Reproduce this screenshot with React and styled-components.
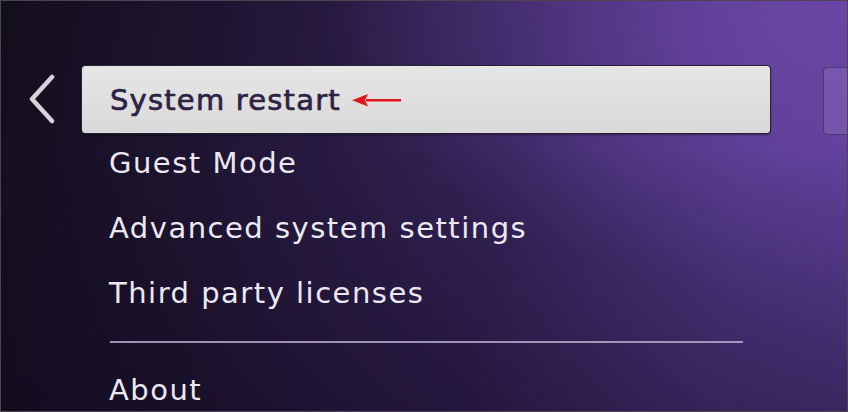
import React from "react";
import styled, { createGlobalStyle } from "styled-components";

const GlobalStyle = createGlobalStyle`
  html, body {
    margin: 0;
    padding: 0;
    background: #1a1424;
  }
  * {
    box-sizing: border-box;
  }
`;

const Screen = styled.main`
  width: 848px;
  height: 412px;
  position: relative;
  overflow: hidden;
  border: 1px solid #4a4550;
  background:
    radial-gradient(ellipse 520px 300px at 100% 0%, rgba(108, 72, 168, 0.9), rgba(108, 72, 168, 0) 100%),
    linear-gradient(100deg, #130e1c 0%, #1f1532 25%, #352359 58%, #553a8c 85%, #5f409a 100%);
  font-family: "DejaVu Sans", "Open Sans", sans-serif;
  display: flex;
`;

const Shade = styled.div`
  position: absolute;
  inset: 0;
  background: linear-gradient(180deg, rgba(0, 0, 0, 0) 35%, rgba(14, 8, 26, 0.45) 100%);
  pointer-events: none;
`;

const BackColumn = styled.div`
  width: 80px;
  flex: none;
  display: flex;
  justify-content: center;
  padding-top: 73px;
  padding-left: 2px;
`;

const Menu = styled.ul`
  list-style: none;
  margin: 0;
  padding: 64px 0 0;
  width: 690px;
  display: flex;
  flex-direction: column;
  position: relative;
  z-index: 1;
`;

const Item = styled.li`
  flex: none;
  height: ${(p) => (p.$selected ? "69px" : "65px")};
  margin-bottom: ${(p) => (p.$selected ? "-4px" : "0")};
  display: flex;
  align-items: center;
  gap: 11px;
  padding-left: 28px;
  font-size: 29px;
  letter-spacing: ${(p) => (p.$selected ? "1.2px" : "1.5px")};
  font-weight: 400;
  -webkit-text-stroke: ${(p) => (p.$selected ? "0.7px #2d2244" : "0")};
  color: ${(p) => (p.$selected ? "#2d2244" : "#ece8f2")};
  border-radius: 4px;
  border: ${(p) => (p.$selected ? "1px solid #2a2233" : "none")};
  background: ${(p) =>
    p.$selected ? "linear-gradient(180deg, #e6e6e6 0%, #d9d9d9 100%)" : "transparent"};
  box-shadow: ${(p) => (p.$selected ? "0 1px 2px rgba(0,0,0,0.4)" : "none")};
`;

const Divider = styled.li`
  flex: none;
  height: 2px;
  margin: 16px 28px 14px 29px;
  background: #b6a7c9;
  opacity: 0.85;
`;

const Peek = styled.div`
  position: absolute;
  left: 822px;
  top: 66px;
  width: 40px;
  height: 68px;
  border-radius: 4px;
  border: 1px solid rgba(40, 25, 70, 0.5);
  background: rgba(150, 120, 190, 0.35);
`;

function BackIcon() {
  return (
    <svg width="30" height="50" viewBox="0 0 30 50">
      <path
        d="M25 3 L5 25 L25 47"
        fill="none"
        stroke="#d6d3da"
        strokeWidth="4.5"
        strokeLinecap="round"
        strokeLinejoin="round"
      />
    </svg>
  );
}

function RedArrow() {
  return (
    <svg width="50" height="14" viewBox="0 0 50 14">
      <path d="M14 6 H49 V8.5 H14 Z" fill="#e01818" />
      <path d="M0 7.2 L16 1 L13 7.2 L16 13.4 Z" fill="#e01818" />
    </svg>
  );
}

const ITEMS = ["Guest Mode", "Advanced system settings", "Third party licenses"];

export default function App() {
  return (
    <>
      <GlobalStyle />
      <Screen>
        <Shade />
        <BackColumn>
          <BackIcon />
        </BackColumn>
        <Menu>
          <Item $selected>
            System restart
            <RedArrow />
          </Item>
          {ITEMS.map((label) => (
            <Item key={label}>{label}</Item>
          ))}
          <Divider />
          <Item>About</Item>
        </Menu>
        <Peek />
      </Screen>
    </>
  );
}
